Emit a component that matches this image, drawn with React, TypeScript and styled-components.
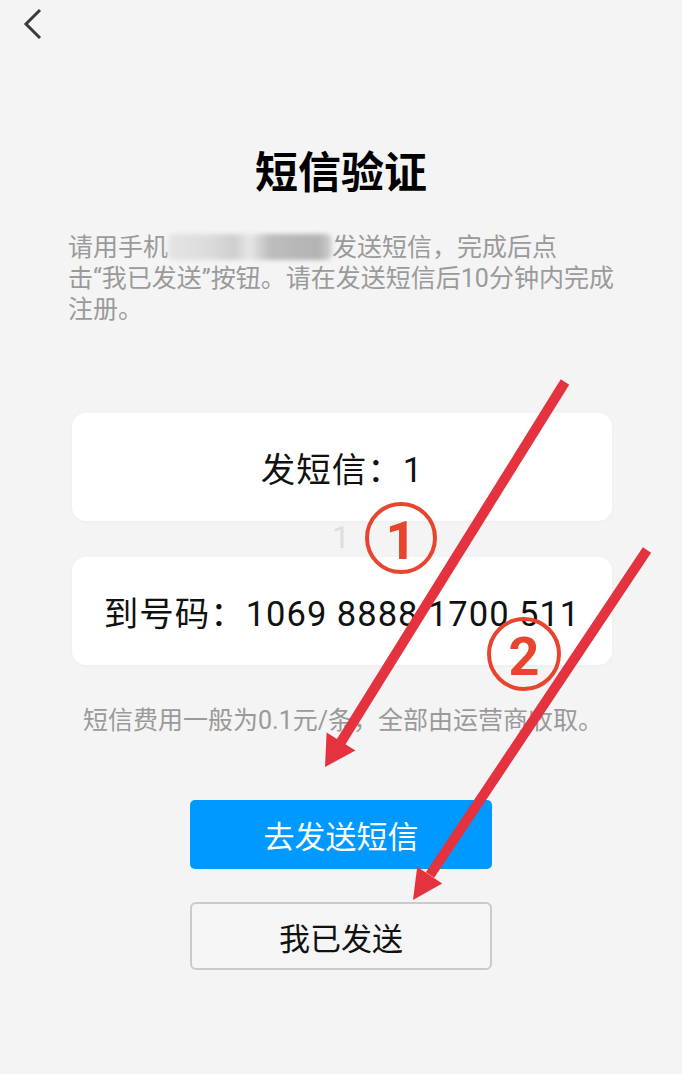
import React from "react";
import styled, { createGlobalStyle } from "styled-components";

const GlobalStyle = createGlobalStyle`
  html, body {
    margin: 0;
    padding: 0;
    background: #f4f4f4;
  }
  body {
    font-family: Roboto, "Noto Sans CJK SC", "Noto Sans", sans-serif;
    -webkit-font-smoothing: antialiased;
  }
`;

const Page = styled.div`
  position: relative;
  width: 682px;
  min-height: 1074px;
  display: flex;
  flex-direction: column;
  background: #f4f4f4;
  overflow: hidden;
`;

const Header = styled.div`
  height: 48px;
  display: flex;
  align-items: center;
  padding-left: 20px;
`;

const BackButton = styled.button`
  border: none;
  background: transparent;
  padding: 0;
  width: 24px;
  height: 32px;
  display: flex;
  align-items: center;
  justify-content: center;
  cursor: pointer;
`;

const Title = styled.h1`
  margin: 100px 0 0;
  font-size: 43px;
  line-height: 50px;
  font-weight: 700;
  color: #000;
  text-align: center;
`;

const Description = styled.p`
  margin: 34px 0 0;
  padding: 0 60px 0 68px;
  font-size: 25px;
  line-height: 31px;
  color: #9a9a9a;
`;

const Masked = styled.span`
  display: inline-block;
  width: 164px;
  height: 26px;
  vertical-align: -4px;
  border-radius: 6px;
  background: linear-gradient(
    90deg,
    #e4e4e4 0%,
    #dcdcdc 25%,
    #cfcfcf 40%,
    #e6e6e6 50%,
    #bdbdbd 62%,
    #b3b3b3 92%,
    #d4d4d4 100%
  );
  filter: blur(2px);
`;

const Cards = styled.div`
  margin: 88px 70px 0 72px;
  display: flex;
  flex-direction: column;
  gap: 36px;
`;

const Card = styled.div`
  height: 108px;
  border-radius: 14px;
  background: #ffffff;
  box-shadow: 0 1px 4px rgba(0, 0, 0, 0.03);
  display: flex;
  align-items: center;
  justify-content: center;
  font-size: 34.5px;
  letter-spacing: 1px;
  color: #111;
`;

const Note = styled.p`
  margin: 40px 0 0;
  padding-left: 4px;
  font-size: 25px;
  line-height: 31px;
  color: #9a9a9a;
  text-align: center;
`;

const Actions = styled.div`
  margin-top: 64px;
  display: flex;
  flex-direction: column;
  align-items: center;
  gap: 33px;
`;

const ActionButton = styled.button<{ $primary?: boolean }>`
  width: 302px;
  height: ${(p) => (p.$primary ? "69px" : "68px")};
  border-radius: ${(p) => (p.$primary ? "5px" : "6px")};
  border: ${(p) => (p.$primary ? "none" : "2px solid #cacaca")};
  background: ${(p) => (p.$primary ? "#0099ff" : "#f5f5f5")};
  color: ${(p) => (p.$primary ? "#ffffff" : "#111111")};
  font-family: inherit;
  font-size: 31px;
  cursor: pointer;
  display: flex;
  align-items: center;
  justify-content: center;
`;

const Ghost = styled.span`
  position: absolute;
  left: 332px;
  top: 518px;
  font-size: 32px;
  color: #dedede;
`;

const Overlay = styled.svg`
  position: absolute;
  left: 0;
  top: 0;
  pointer-events: none;
`;

const ARROW = "#e4323f";
const MARK = "#e8452f";

export default function App() {
  return (
    <>
      <GlobalStyle />
      <Page>
        <Header>
          <BackButton aria-label="返回">
            <svg width="22" height="32" viewBox="0 0 22 32">
              <path d="M19 2 L5 16 L19 30" fill="none" stroke="#3a3a3a" strokeWidth="3" />
            </svg>
          </BackButton>
        </Header>
        <Title>短信验证</Title>
        <Description>
          请用手机<Masked />发送短信，完成后点
          <br />
          击“我已发送”按钮。请在发送短信后10分钟内完成
          <br />
          注册。
        </Description>
        <Cards>
          <Card>发短信：1</Card>
          <Card>到号码：1069 8888 1700 511</Card>
        </Cards>
        <Note>短信费用一般为0.1元/条，全部由运营商收取。</Note>
        <Actions>
          <ActionButton $primary>去发送短信</ActionButton>
          <ActionButton>我已发送</ActionButton>
        </Actions>
        <Ghost>1</Ghost>
        <Overlay width="682" height="1074" viewBox="0 0 682 1074">
          <circle cx="401" cy="538" r="34" fill="none" stroke={MARK} strokeWidth="4" />
          <text x="401" y="540" textAnchor="middle" dominantBaseline="central" fontSize="54" fontWeight="700" fill={MARK} fontFamily="Roboto, sans-serif">1</text>
          <circle cx="524" cy="654" r="35" fill="none" stroke={MARK} strokeWidth="4" />
          <text x="524" y="656" textAnchor="middle" dominantBaseline="central" fontSize="54" fontWeight="700" fill={MARK} fontFamily="Roboto, sans-serif">2</text>

          <line x1="565" y1="382" x2="341" y2="742" stroke={ARROW} strokeWidth="10" />
          <polygon points="325,767 355.4,750.6 326.6,732.6" fill={ARROW} />

          <line x1="647" y1="550" x2="430" y2="875" stroke={ARROW} strokeWidth="10" />
          <polygon points="413,900 442.2,883.4 417.2,866.8" fill={ARROW} />
        </Overlay>
      </Page>
    </>
  );
}
